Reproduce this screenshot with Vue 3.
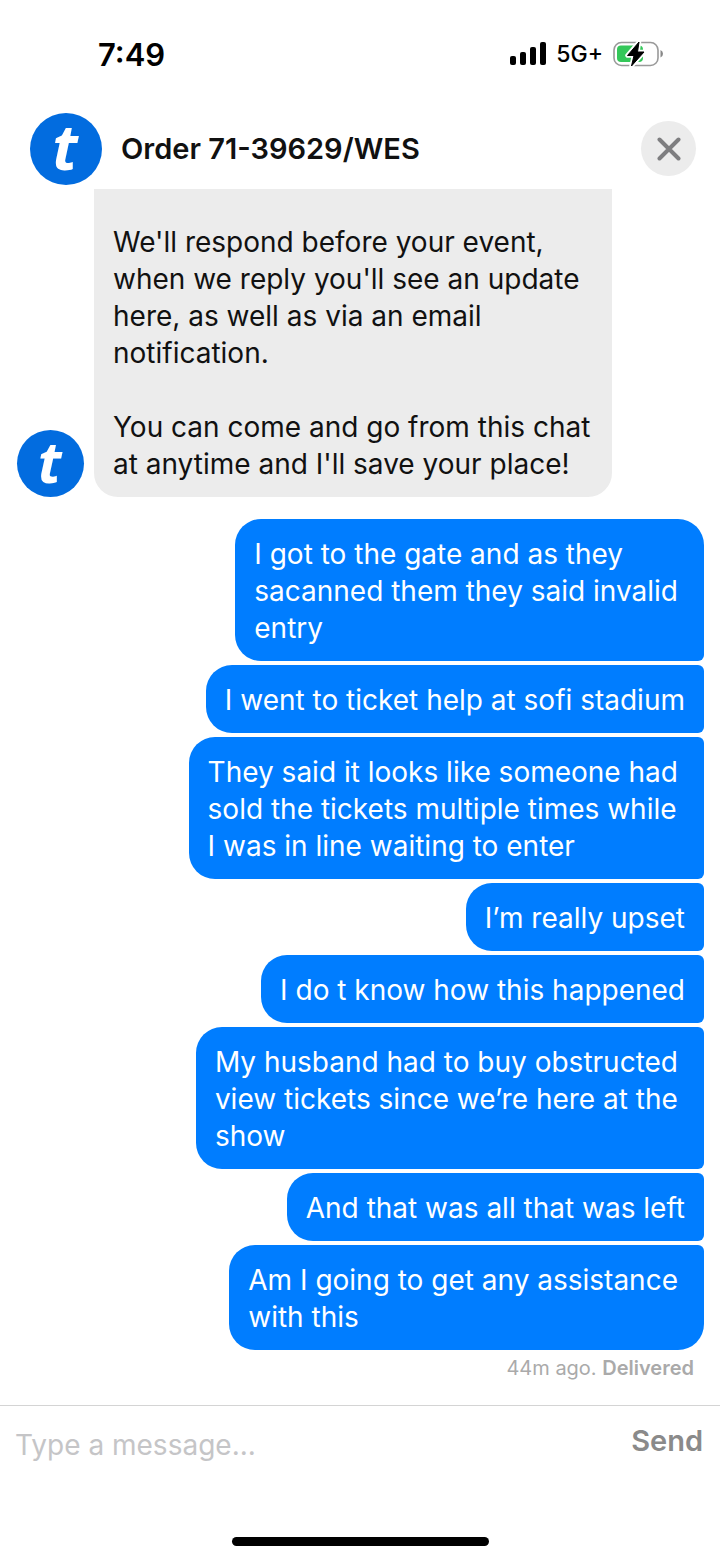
<script setup>
import { ref } from 'vue'

const draft = ref('')

const replies = [
  'I got to the gate and as they\nsacanned them they said invalid\nentry',
  'I went to ticket help at sofi stadium',
  'They said it looks like someone had\nsold the tickets multiple times while\nI was in line waiting to enter',
  'I’m really upset',
  'I do t know how this happened',
  'My husband had to buy obstructed\nview tickets since we’re here at the\nshow',
  'And that was all that was left',
  'Am I going to get any assistance\nwith this'
]
</script>

<template>
  <div class="screen">
    <div class="status">
      <span class="time">7:49</span>
      <div class="indicators">
        <svg class="signal" viewBox="0 0 36 24" aria-hidden="true">
          <rect x="0" y="14" width="6" height="9" rx="2" />
          <rect x="10" y="10" width="6" height="13" rx="2" />
          <rect x="20" y="5" width="6" height="18" rx="2" />
          <rect x="30" y="0" width="6" height="23" rx="2" />
        </svg>
        <span class="network">5G+</span>
        <svg class="battery" viewBox="0 0 50 26" aria-hidden="true">
          <rect x="1" y="1.5" width="44" height="23" rx="7.5" fill="#fff" stroke="#999" stroke-width="1.6" />
          <path d="M8 4.500H26Q30 4.500 30 8.500V17Q30 21 26 21H8Q4 21 4 17V8.500Q4 4.500 8 4.500Z" fill="#34c759" />
          <path d="M47.500 9Q50 10 50 12.800T47.500 16.600Z" fill="#888" />
          <path d="M26 1L14.500 14.500H21L18.500 25L31 11H24.500Z" fill="#fff" stroke="#fff" stroke-width="4.500" stroke-linejoin="round" />
          <path d="M26 1L14.500 14.500H21L18.500 25L31 11H24.500Z" fill="#000" stroke="#000" stroke-width="1" stroke-linejoin="round" />
        </svg>
      </div>
    </div>

    <header class="header">
      <svg class="brand" viewBox="0 0 72 72" role="img" aria-label="Ticket support">
        <circle cx="36" cy="36" r="36" />
        <text x="35" y="57" text-anchor="middle">t</text>
      </svg>
      <h1>Order 71-39629/WES</h1>
      <button class="close" type="button" aria-label="Close">
        <svg viewBox="0 0 24 24" aria-hidden="true"><path d="M2.500 2.500L21.500 21.500M21.500 2.500L2.500 21.500" /></svg>
      </button>
    </header>

    <main class="chat">
      <div class="incoming">
        <svg class="avatar" viewBox="0 0 72 72" role="img" aria-label="Ticket support">
          <circle cx="36" cy="36" r="36" />
          <text x="35" y="57" text-anchor="middle">t</text>
        </svg>
        <div class="note">
          <p>We'll respond before your event,<br>when we reply you'll see an update<br>here, as well as via an email<br>notification.</p>
          <p>You can come and go from this chat<br>at anytime and I'll save your place!</p>
        </div>
      </div>
      <div class="outgoing">
        <p v-for="reply in replies" :key="reply" class="bubble" :class="{ wrapped: reply.includes('\n') }">{{ reply }}</p>
      </div>
      <p class="receipt">44m ago. <strong>Delivered</strong></p>
    </main>

    <form class="composer" @submit.prevent>
      <input v-model="draft" type="text" placeholder="Type a message..." aria-label="Message">
      <button class="send" type="submit">Send</button>
    </form>
    <div class="home"><span></span></div>
  </div>
</template>

<style>
body {
  margin: 0;
  background: #fff;
}
</style>

<style scoped>
.screen {
  display: flex;
  flex-direction: column;
  min-height: 100vh;
  background: #fff;
  color: #111;
  font-family: Inter, "Liberation Sans", sans-serif;
}
.status {
  display: flex;
  align-items: center;
  justify-content: space-between;
  height: 108px;
  padding: 0 57px 0 98px;
  box-sizing: border-box;
  color: #000;
}
.time {
  font-size: 31px;
  font-weight: 600;
}
.indicators {
  display: flex;
  align-items: center;
  gap: 10px;
}
.signal {
  width: 36px;
  height: 24px;
}
.network {
  font-size: 23px;
  font-weight: 500;
}
.battery {
  width: 50px;
  height: 26px;
}
.header {
  display: flex;
  align-items: center;
  height: 81px;
  padding: 0 24px 0 30px;
  gap: 19px;
}
.brand {
  width: 72px;
  height: 72px;
  flex: none;
}
.brand,
.avatar {
  overflow: visible;
}
.brand circle,
.avatar circle {
  fill: #026cdf;
}
.brand text,
.avatar text {
  fill: #fff;
  font: italic 700 62px "Open Sans", "Noto Sans", sans-serif;
}
h1 {
  flex: 1;
  margin: 0;
  font-size: 29px;
  font-weight: 600;
}
.close {
  display: grid;
  place-items: center;
  width: 55px;
  height: 55px;
  padding: 0;
  border: 0;
  border-radius: 50%;
  background: #ececec;
}
.close svg {
  width: 24px;
  height: 24px;
  fill: none;
  stroke: #7e7e80;
  stroke-width: 4;
  stroke-linecap: round;
}
.chat {
  flex: 1;
  font-size: 28px;
  line-height: 37px;
}
.incoming {
  display: flex;
  align-items: flex-end;
  gap: 10px;
  padding: 0 17px;
}
.avatar {
  width: 67px;
  height: 67px;
  flex: none;
}
.note {
  padding: 35px 22px 14px 19px;
  border-radius: 0 0 24px 24px;
  background: #ececec;
  white-space: nowrap;
}
.note p {
  margin: 0;
}
.note p + p {
  margin-top: 37px;
}
.outgoing {
  display: flex;
  flex-direction: column;
  align-items: flex-end;
  gap: 4px;
  padding: 22px 16px 0;
}
.bubble {
  margin: 0;
  padding: 17px 19px 14px;
  border-radius: 26px 6px 6px 26px;
  background: #007dff;
  color: #fff;
  white-space: pre-line;
}
.bubble.wrapped {
  padding-right: 26px;
}
.bubble:first-child {
  border-top-right-radius: 26px;
}
.bubble:last-child {
  border-bottom-right-radius: 26px;
}
.receipt {
  margin: 4px 26px 0;
  color: #aaa;
  font-size: 20px;
  line-height: 28px;
  text-align: right;
}
.receipt strong {
  font-weight: 600;
}
.composer {
  display: flex;
  align-items: flex-start;
  justify-content: space-between;
  padding: 16px 17px 0 15px;
  border-top: 1px solid #d4d4d4;
}
.composer input {
  flex: 1;
  min-width: 0;
  height: 46px;
  padding: 0;
  border: 0;
  outline: 0;
  background: none;
  color: #111;
  font: inherit;
  font-size: 28px;
}
.composer input::placeholder {
  color: #c5c5c7;
  opacity: 1;
}
.send {
  padding: 0;
  border: 0;
  background: none;
  color: #8a8a8a;
  font: inherit;
  font-size: 29px;
  font-weight: 600;
  line-height: 38px;
}
.home {
  display: flex;
  justify-content: center;
  padding: 69px 0 15px;
}
.home span {
  width: 257px;
  height: 9px;
  border-radius: 5px;
  background: #000;
}
</style>
